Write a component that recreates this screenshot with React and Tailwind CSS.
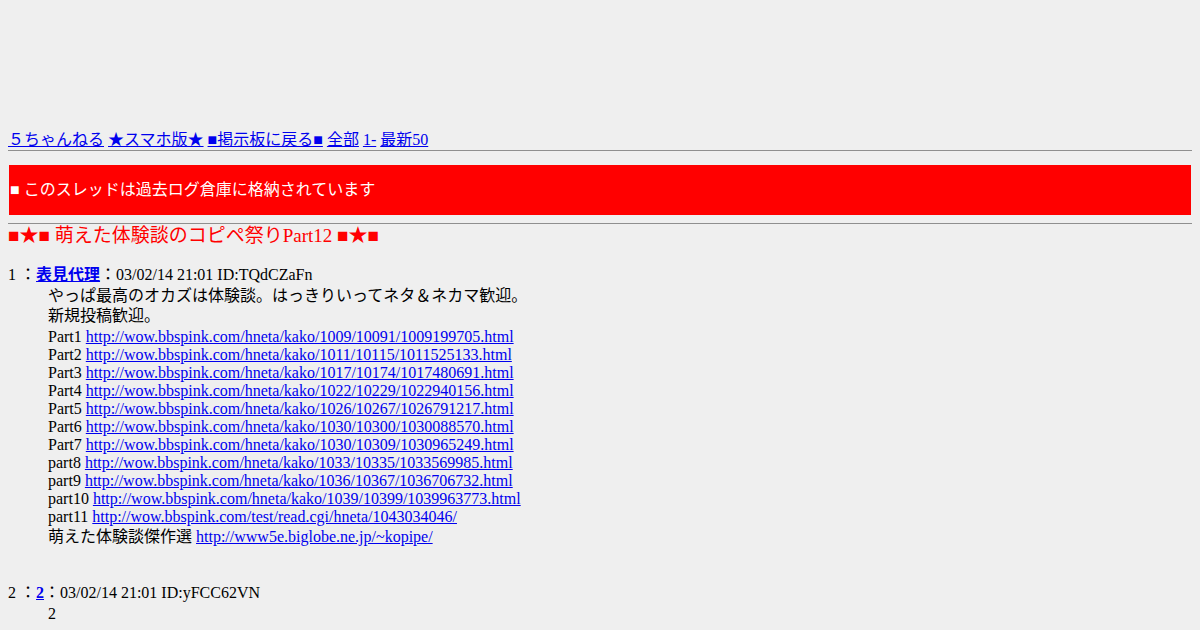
export default function App() {
  const font = { fontFamily: '"Liberation Serif", "Noto Sans CJK JP", serif' };
  const parts = [
    ["Part1", "http://wow.bbspink.com/hneta/kako/1009/10091/1009199705.html"],
    ["Part2", "http://wow.bbspink.com/hneta/kako/1011/10115/1011525133.html"],
    ["Part3", "http://wow.bbspink.com/hneta/kako/1017/10174/1017480691.html"],
    ["Part4", "http://wow.bbspink.com/hneta/kako/1022/10229/1022940156.html"],
    ["Part5", "http://wow.bbspink.com/hneta/kako/1026/10267/1026791217.html"],
    ["Part6", "http://wow.bbspink.com/hneta/kako/1030/10300/1030088570.html"],
    ["Part7", "http://wow.bbspink.com/hneta/kako/1030/10309/1030965249.html"],
    ["part8", "http://wow.bbspink.com/hneta/kako/1033/10335/1033569985.html"],
    ["part9", "http://wow.bbspink.com/hneta/kako/1036/10367/1036706732.html"],
    ["part10", "http://wow.bbspink.com/hneta/kako/1039/10399/1039963773.html"],
    ["part11", "http://wow.bbspink.com/test/read.cgi/hneta/1043034046/"],
  ];
  const link = "text-[#0000ee] underline";
  return (
    <div className="min-h-screen bg-[#efefef] p-2 text-[16px] text-black" style={font}>
      <div className="h-[122px]" />
      <div className="leading-[20px] whitespace-nowrap">
        <a className={link}>５ちゃんねる</a> <a className={link}>★スマホ版★</a>{" "}
        <a className={link}>■掲示板に戻る■</a> <a className={link}>全部</a>{" "}
        <a className={link}>1-</a> <a className={link}>最新50</a>
      </div>
      <div className="border-t border-[#8f8f8f]" />
      <div className="mt-[14px] mx-px h-[50px] bg-[#ff0000] flex items-center text-white">
        <span className="pl-[1px]">■ このスレッドは過去ログ倉庫に格納されています</span>
      </div>
      <div className="mt-[8px] border-t border-[#8f8f8f]" />
      <div className="text-[#ff0000] text-[19px] leading-[24px]">■★■ 萌えた体験談のコピペ祭りPart12 ■★■</div>
      <div className="mt-[16px]">
        <div className="leading-[22px]">
          1 ：<a className="text-[#0000ee] underline font-bold">表見代理</a>：03/02/14 21:01 ID:TQdCZaFn
        </div>
        <div className="ml-10">
          <div className="leading-[20px]">やっぱ最高のオカズは体験談。はっきりいってネタ＆ネカマ歓迎。</div>
          <div className="leading-[20px]">新規投稿歓迎。</div>
          <div className="mt-[2px]">
            {parts.map(([p, u]) => (
              <div key={p} className="leading-[18px]">
                {p} <a className={link}>{u}</a>
              </div>
            ))}
          </div>
          <div className="leading-[22px]">萌えた体験談傑作選 <a className={link}>http://www5e.biglobe.ne.jp/~kopipe/</a></div>
        </div>
      </div>
      <div className="mt-[34px]">
        <div className="leading-[22px]">
          2 ：<a className="text-[#0000ee] underline font-bold">2</a>：03/02/14 21:01 ID:yFCC62VN
        </div>
        <div className="ml-10 leading-[20px]">2</div>
      </div>
    </div>
  );
}
